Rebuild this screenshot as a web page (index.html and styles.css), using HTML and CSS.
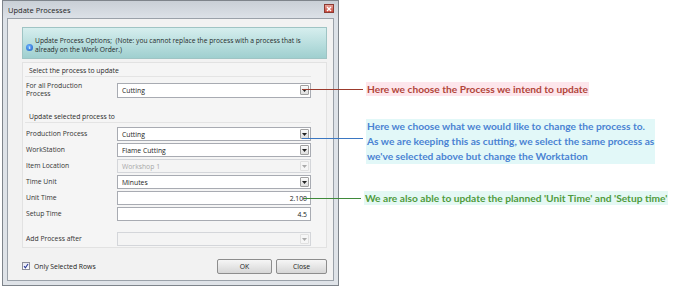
FILE: index.html
```html
<!DOCTYPE html>
<html>
<head>
<meta charset="utf-8">
<link rel="stylesheet" href="styles.css">
</head>
<body>
<div class="canvas">
  <div class="dialog">
    <div class="titlebar">
      <span class="title">Update Processes</span>
      <span class="close"><svg width="6" height="6" viewBox="0 0 6 6"><path d="M1 1L5 5M5 1L1 5" stroke="#fff" stroke-width="1.4"/></svg></span>
    </div>
    <div class="client">
      <div class="banner">
        <span class="info-icon">i</span>
        <p>Update Process Options;&nbsp; (Note: you cannot replace the process with a process that is<br>already on the Work Order.)</p>
      </div>
      <div class="group">
        <div class="section-head first">Select the process to update</div>
        <div class="row tall">
          <span class="label">For all Production<br>Process</span>
          <div class="combo">Cutting<span class="drop"><svg width="5" height="3" viewBox="0 0 5 3"><path d="M0 0H5L2.5 3Z" fill="#222"/></svg></span></div>
        </div>
        <div class="section-head second">Update selected process to</div>
        <div class="row">
          <span class="label">Production Process</span>
          <div class="combo">Cutting<span class="drop"><svg width="5" height="3" viewBox="0 0 5 3"><path d="M0 0H5L2.5 3Z" fill="#222"/></svg></span></div>
        </div>
        <div class="row">
          <span class="label">WorkStation</span>
          <div class="combo">Flame Cutting<span class="drop"><svg width="5" height="3" viewBox="0 0 5 3"><path d="M0 0H5L2.5 3Z" fill="#222"/></svg></span></div>
        </div>
        <div class="row">
          <span class="label">Item Location</span>
          <div class="combo disabled">Workshop 1<span class="drop"><svg width="5" height="3" viewBox="0 0 5 3"><path d="M0 0H5L2.5 3Z" fill="#aaa"/></svg></span></div>
        </div>
        <div class="row">
          <span class="label">Time Unit</span>
          <div class="combo">Minutes<span class="drop"><svg width="5" height="3" viewBox="0 0 5 3"><path d="M0 0H5L2.5 3Z" fill="#222"/></svg></span></div>
        </div>
        <div class="row">
          <span class="label">Unit Time</span>
          <div class="textbox">2.100</div>
        </div>
        <div class="row">
          <span class="label">Setup Time</span>
          <div class="textbox">4.5</div>
        </div>
        <div class="row last">
          <span class="label">Add Process after</span>
          <div class="combo disabled"><span class="drop"><svg width="5" height="3" viewBox="0 0 5 3"><path d="M0 0H5L2.5 3Z" fill="#aaa"/></svg></span></div>
        </div>
      </div>
      <div class="footer">
        <label class="check"><span class="box"><svg width="6" height="6" viewBox="0 0 6 6"><path d="M1 3.2L2.4 4.8L5 1" stroke="#2a3a9a" stroke-width="1.1" fill="none"/></svg></span>Only Selected Rows</label>
        <div class="buttons">
          <span class="button ok">OK</span>
          <span class="button close-btn">Close</span>
        </div>
      </div>
    </div>
  </div>

  <div class="note red">
    <span class="line"></span>
    <span class="text">Here we choose the Process we intend to update</span>
  </div>
  <div class="note blue">
    <span class="line"></span>
    <span class="text">Here we choose what we would like to change the process to.<br>As we are keeping this as cutting, we select the same process as<br>we've selected above but change the Worktation</span>
  </div>
  <div class="note green">
    <span class="line"></span>
    <span class="text">We are also able to update the planned 'Unit Time' and 'Setup time'</span>
  </div>
</div>
</body>
</html>
```

FILE: styles.css
```css
* { box-sizing: border-box; }
html, body { margin: 0; padding: 0; background: #fff; }
.canvas {
  position: relative;
  width: 681px;
  height: 296px;
  overflow: hidden;
  font-family: "Open Sans", "DejaVu Sans", sans-serif;
}
.dialog {
  margin-left: 2px;
  width: 337px;
  height: 286px;
  border: 1px solid #7e848b;
  background: linear-gradient(#c9cfd6, #dde2e8 18px, #dfe3e8);
  display: flex;
  flex-direction: column;
  padding: 0 4px 4px 4px;
}
.titlebar {
  height: 17px;
  display: flex;
  align-items: center;
  justify-content: space-between;
  padding-left: 1px;
  font-size: 7.5px;
  color: #1e1e1e;
}
.close {
  width: 10px;
  height: 9px;
  margin-top: -2px;
  background: linear-gradient(#e8a39a, #c9473a);
  border: 1px solid #8c3a32;
  display: flex;
  align-items: center;
  justify-content: center;
}
.client {
  flex: 1;
  border: 1px solid #9aa1a9;
  background: #f2f2f2;
  padding: 8px 6px 0 14px;
  display: flex;
  flex-direction: column;
}
.banner {
  height: 32px;
  border: 1px solid #9fc4c4;
  background: linear-gradient(#d6eeee, #b5dcdc 60%, #9fcfcf);
  display: flex;
  align-items: center;
  padding-left: 3px;
}
.banner p {
  margin: 0;
  font-size: 6.7px;
  line-height: 9px;
  color: #1f2a2a;
  padding-top: 4px;
}
.info-icon {
  width: 7px;
  height: 7px;
  border-radius: 50%;
  background: radial-gradient(circle at 40% 35%, #6ab0ff, #1b5fc4);
  color: #fff;
  font-size: 5px;
  font-weight: bold;
  display: flex;
  align-items: center;
  justify-content: center;
  margin-right: 2px;
  margin-top: 8px;
  font-family: "Liberation Serif", serif;
}
.group {
  margin-top: 3px;
  height: 186px;
  border: 1px solid #e2e2e2;
  background: #f5f5f5;
  padding: 0 15px 0 2px;
  display: flex;
  flex-direction: column;
  font-size: 6.8px;
  color: #333;
}
.section-head {
  height: 12px;
  padding-left: 4px;
  line-height: 12px;
  border-bottom: 1px solid #e4e4e4;
  color: #2a2a2a;
}
.section-head.first { margin-top: 2px; }
.section-head.second { margin-top: 11px; margin-bottom: 2px; }
.row {
  display: flex;
  align-items: center;
  height: 14px;
  margin-top: 2px;
}
.row.tall {
  height: 20px;
  margin-top: 3px;
}
.row.last { margin-top: 11px; }
.label {
  width: 92px;
  line-height: 8px;
  color: #333;
  padding-left: 1px;
}
.combo, .textbox {
  width: 194px;
  height: 14px;
  border: 1px solid #a8abb2;
  background: #fff;
  display: flex;
  align-items: center;
  padding-left: 4px;
  position: relative;
  color: #222;
}
.row.tall .combo { height: 15px; }
.textbox {
  justify-content: flex-end;
  padding-right: 3px;
}
.drop {
  position: absolute;
  right: 1px;
  top: 50%;
  margin-top: -5px;
  width: 9px;
  height: 10px;
  border: 1px solid #a0a0a0;
  border-radius: 1px;
  background: linear-gradient(#fbfbfb, #dedede);
  display: flex;
  align-items: center;
  justify-content: center;
}
.combo.disabled {
  background: #f4f4f4;
  border-color: #d4d6da;
  color: #a8a8a8;
}
.combo.disabled .drop {
  border-color: #e0e0e0;
  background: #f6f6f6;
}
.footer {
  display: flex;
  align-items: center;
  justify-content: space-between;
  height: 24px;
  margin-top: 6px;
  font-size: 6.8px;
  color: #222;
}
.check {
  display: flex;
  align-items: center;
}
.box {
  width: 8px;
  height: 8px;
  border: 1px solid #8e8f99;
  background: linear-gradient(#e8e8f4, #fff);
  display: flex;
  align-items: center;
  justify-content: center;
  margin-right: 4px;
}
.buttons { display: flex; gap: 4px; }
.button {
  height: 15px;
  border: 1px solid #8d8d8d;
  border-radius: 2px;
  background: linear-gradient(#f6f6f6, #e6e6e6 50%, #d6d6d6);
  display: flex;
  align-items: center;
  justify-content: center;
  color: #222;
}
.button.ok { width: 55px; }
.button.close-btn { width: 51px; }

.note {
  position: absolute;
  display: flex;
  align-items: flex-start;
  font-family: "Lato", "Open Sans", sans-serif;
  font-weight: bold;
  font-size: 10.2px;
}
.note .line {
  display: block;
  height: 1px;
  margin-right: 3px;
}
.note .text { padding: 0 1px; }
.note.red { left: 302px; top: 82px; }
.note.red .line { width: 61px; margin-top: 7px; background: #9b3a2c; }
.note.red .text { color: #b2453a; background: #fde6ec; line-height: 14px; }
.note.blue { left: 302px; top: 119px; }
.note.blue .line { width: 61px; margin-top: 19px; background: #3b77c2; }
.note.blue .text { color: #4a83d3; background: #e2f8f8; line-height: 15px; }
.note.green { left: 303px; top: 191px; }
.note.green .line { width: 58px; margin-top: 7px; background: #3f8a3a; }
.note.green .text { color: #4f9b3c; background: #e4f8f4; line-height: 14px; }
```
